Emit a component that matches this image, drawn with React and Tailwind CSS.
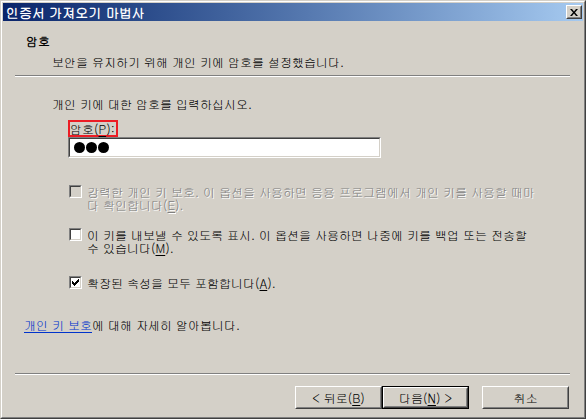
import React from 'react';

const font = "font-['Gulim','Noto_Sans_CJK_KR','Liberation_Sans',sans-serif]";

const Checkbox = ({ checked, disabled }) => (
  <div className="w-[13px] h-[13px] shrink-0 border border-t-[#808080] border-l-[#808080] border-r-white border-b-white">
    <div
      className={`w-full h-full border border-t-[#404040] border-l-[#404040] border-r-[#d4d0c8] border-b-[#d4d0c8] ${
        disabled ? 'bg-[#d4d0c8]' : 'bg-white'
      } flex items-center justify-center`}
    >
      {checked && (
        <svg width="7" height="7" viewBox="0 0 7 7">
          <path d="M0 2h1v1h1v1h1V3h1V2h1V1h1V0h1v3h-1v1h-1v1h-1v1h-1v1h-1V6H1V5H0z" fill="#000" />
        </svg>
      )}
    </div>
  </div>
);

const Button = ({ children, isDefault }) => (
  <div className={`w-[87px] h-[23px] ${isDefault ? 'border border-black' : ''}`}>
    <div className="w-full h-full border border-t-white border-l-white border-r-[#404040] border-b-[#404040]">
      <div className="w-full h-full border border-t-[#d4d0c8] border-l-[#d4d0c8] border-r-[#808080] border-b-[#808080] flex items-center justify-center text-[12px] leading-[12px] text-black">
        {children}
      </div>
    </div>
  </div>
);

const U = ({ children }) => <span className="underline underline-offset-2">{children}</span>;

export default function App() {
  return (
    <div className={`w-[586px] h-[419px] bg-[#d4d0c8] border border-t-[#d4d0c8] border-l-[#d4d0c8] border-r-[#404040] border-b-[#404040] ${font}`}>
      <div className="h-full border border-t-white border-l-white border-r-[#808080] border-b-[#808080] p-px flex flex-col">
        {/* title bar */}
        <div className="h-[18px] shrink-0 bg-gradient-to-r from-[#0a246a] to-[#a6caf0] flex items-center justify-between pl-[3px] pr-[1px]">
          <span className="text-white font-bold text-[13px] leading-[13px] whitespace-nowrap">인증서 가져오기 마법사</span>
          <div className="w-[16px] h-[14px] border border-t-white border-l-white border-r-[#404040] border-b-[#404040] bg-[#d4d0c8]">
            <div className="w-full h-full border border-t-[#d4d0c8] border-l-[#d4d0c8] border-r-[#808080] border-b-[#808080] flex items-center justify-center">
              <svg width="8" height="7" viewBox="0 0 8 7">
                <path d="M0 0h2l2 2.5L6 0h2L5 3.5 8 7H6L4 4.5 2 7H0l3-3.5z" fill="#000" />
              </svg>
            </div>
          </div>
        </div>

        {/* header */}
        <div className="mt-[14px] pl-[23px] text-[12px] leading-[12px] font-bold text-black">암호</div>
        <div className="mt-[9px] pl-[49px] text-[12px] leading-[12px] text-black whitespace-nowrap">
          보안을 유지하기 위해 개인 키에 암호를 설정했습니다.
        </div>
        <div className="mt-[7px] ml-[12px] w-[555px] border-t border-t-[#808080] border-b border-b-white" />

        {/* body */}
        <div className="mt-[21px] ml-[49px] text-[12px] leading-[12px] text-black whitespace-nowrap">
          개인 키에 대한 암호를 입력하십시오.
        </div>
        <div className="mt-[10px] ml-[65px] w-[50px] h-[17px] border-2 border-[#ec1c24] flex items-center text-[12px] leading-[12px] text-black whitespace-nowrap">
          암호(<U>P</U>):
        </div>
        <div className="ml-[65px] w-[313px] h-[21px] border border-t-[#808080] border-l-[#808080] border-r-white border-b-white">
          <div className="w-full h-full border border-t-[#404040] border-l-[#404040] border-r-[#d4d0c8] border-b-[#d4d0c8] bg-white flex items-center pl-[4px] gap-px">
            <span className="w-[11px] h-[11px] rounded-full bg-black" />
            <span className="w-[11px] h-[11px] rounded-full bg-black" />
            <span className="w-[11px] h-[11px] rounded-full bg-black" />
          </div>
        </div>

        <div className="mt-[27px] ml-[66px] flex items-start gap-[5px]">
          <Checkbox disabled />
          <div className="text-[12px] leading-[13px] text-[#808080] [text-shadow:1px_1px_0_#fff]">
            <div className="whitespace-nowrap">강력한 개인 키 보호. 이 옵션을 사용하면 응용 프로그램에서 개인 키를 사용할 때마</div>
            <div className="whitespace-nowrap">
              다 확인합니다(<U>E</U>).
            </div>
          </div>
        </div>

        <div className="mt-[17px] ml-[66px] flex items-start gap-[5px]">
          <Checkbox />
          <div className="text-[12px] leading-[13px] text-black">
            <div className="whitespace-nowrap">이 키를 내보낼 수 있도록 표시. 이 옵션을 사용하면 나중에 키를 백업 또는 전송할</div>
            <div className="whitespace-nowrap">
              수 있습니다(<U>M</U>).
            </div>
          </div>
        </div>

        <div className="mt-[22px] ml-[66px] flex items-center gap-[5px]">
          <Checkbox checked />
          <div className="text-[12px] leading-[12px] text-black whitespace-nowrap">
            확장된 속성을 모두 포함합니다(<U>A</U>).
          </div>
        </div>

        <div className="mt-[30px] ml-[21px] text-[12px] leading-[12px] text-black whitespace-nowrap">
          <a className="text-[#0033cc] underline underline-offset-2">개인 키 보호</a>에 대해 자세히 알아봅니다.
        </div>

        <div className="mt-[42px] ml-[12px] w-[555px] border-t border-t-[#808080] border-b border-b-white" />

        <div className="mt-[11px] ml-[292px] flex">
          <Button>
            &lt; 뒤로(<U>B</U>)
          </Button>
          <Button isDefault>
            다음(<U>N</U>) &gt;
          </Button>
          <div className="ml-[13px]">
            <Button>취소</Button>
          </div>
        </div>
      </div>
    </div>
  );
}
